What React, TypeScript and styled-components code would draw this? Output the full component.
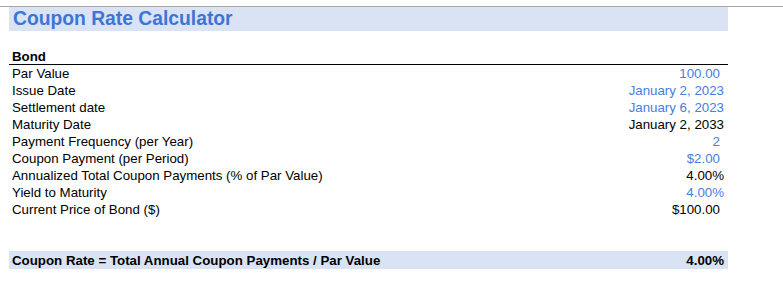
import React from 'react';
import styled, { createGlobalStyle } from 'styled-components';

const GlobalStyle = createGlobalStyle`
  body {
    margin: 0;
    background: #ffffff;
    font-family: 'Liberation Sans', Arial, sans-serif;
  }
`;

const Page = styled.div`
  width: 783px;
  height: 308px;
  padding-top: 6px;
  box-sizing: border-box;
`;

const TopRule = styled.div`
  height: 1px;
  background: #a6a6a6;
`;

const Sheet = styled.div`
  margin-left: 9px;
  width: 719px;
`;

const TitleBar = styled.div`
  height: 24px;
  background: #dae3f3;
  display: flex;
  align-items: center;
  padding-left: 4px;
`;

const Title = styled.h1`
  margin: 0;
  font-size: 19.3px;
  font-weight: bold;
  color: #3a76d8;
  line-height: 24px;
`;

const SectionHead = styled.div`
  margin-top: 16px;
  height: 17px;
  border-bottom: 1.5px solid #000;
  padding-left: 3px;
  font-size: 13.3px;
  font-weight: bold;
  line-height: 19px;
  color: #000;
`;

const Rows = styled.div`
  display: flex;
  flex-direction: column;
`;

const Row = styled.div`
  height: 17px;
  display: flex;
  align-items: center;
  justify-content: space-between;
  font-size: 13.3px;
  padding-left: 3px;
`;

const Label = styled.span`
  color: #000;
`;

const Value = styled.span<{ input?: boolean; pad?: number }>`
  color: ${({ input }) => (input ? '#4a7de0' : '#000')};
  padding-right: ${({ pad }) => pad ?? 4}px;
`;

const ResultBar = styled.div`
  margin-top: 33px;
  height: 18px;
  background: #dae3f3;
  display: flex;
  align-items: center;
  justify-content: space-between;
  padding: 0 4px 0 3px;
  font-size: 13.3px;
  font-weight: bold;
  color: #000;
`;

const rows = [
  { label: 'Par Value', value: '100.00', input: true, pad: 8 },
  { label: 'Issue Date', value: 'January 2, 2023', input: true, pad: 4 },
  { label: 'Settlement date', value: 'January 6, 2023', input: true, pad: 4 },
  { label: 'Maturity Date', value: 'January 2, 2033', input: false, pad: 4 },
  { label: 'Payment Frequency (per Year)', value: '2', input: true, pad: 8 },
  { label: 'Coupon Payment (per Period)', value: '$2.00', input: true, pad: 8 },
  { label: 'Annualized Total Coupon Payments (% of Par Value)', value: '4.00%', input: false, pad: 4 },
  { label: 'Yield to Maturity', value: '4.00%', input: true, pad: 4 },
  { label: 'Current Price of Bond ($)', value: '$100.00', input: false, pad: 8 },
];

const App: React.FC = () => {
  return (
    <Page>
      <GlobalStyle />
      <TopRule />
      <Sheet>
        <TitleBar>
          <Title>Coupon Rate Calculator</Title>
        </TitleBar>
        <SectionHead>Bond</SectionHead>
        <Rows>
          {rows.map((r) => (
            <Row key={r.label}>
              <Label>{r.label}</Label>
              <Value input={r.input} pad={r.pad}>
                {r.value}
              </Value>
            </Row>
          ))}
        </Rows>
        <ResultBar>
          <span>Coupon Rate = Total Annual Coupon Payments / Par Value</span>
          <span>4.00%</span>
        </ResultBar>
      </Sheet>
    </Page>
  );
};

export default App;
